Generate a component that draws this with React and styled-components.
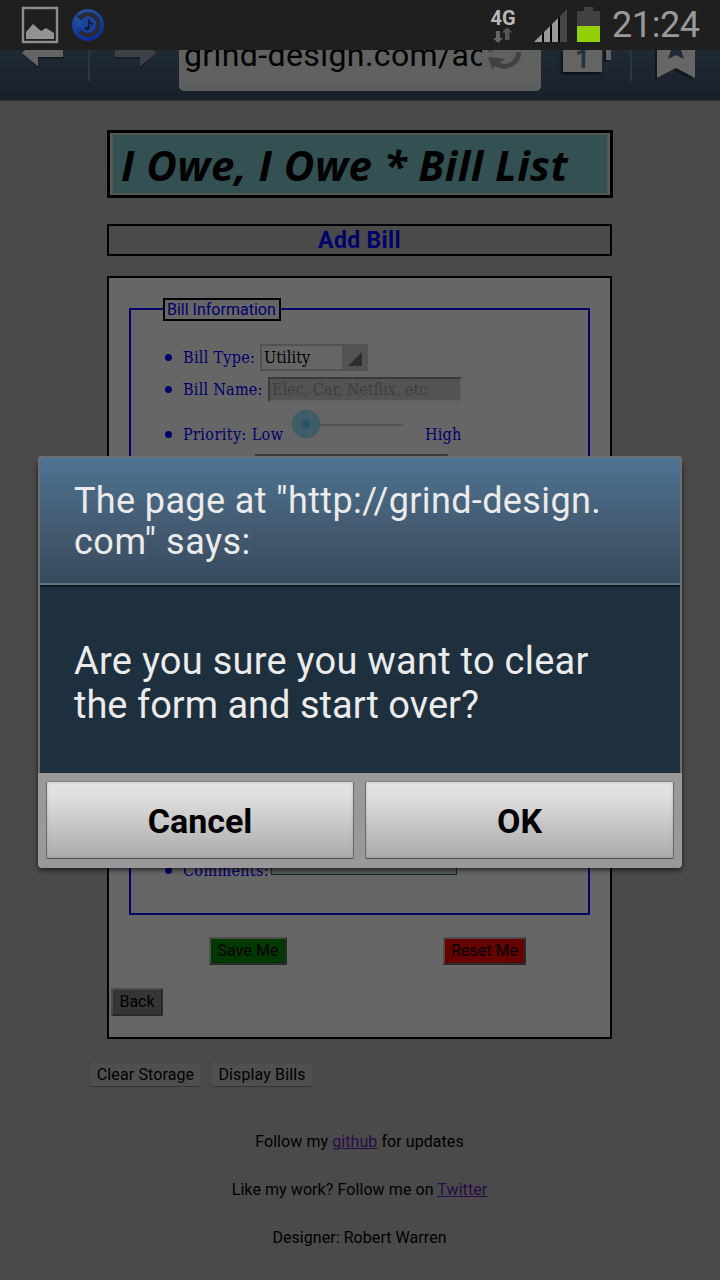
import React from 'react';
import styled, { createGlobalStyle } from 'styled-components';

const Global = createGlobalStyle`
  * { box-sizing: border-box; }
  body { margin: 0; background: #4a4a4a; }
  button, input, select { margin: 0; outline: none; }
`;

const sans = `Roboto, 'Liberation Sans', sans-serif`;
const serif = `'DejaVu Serif Condensed', 'DejaVu Serif', serif`;

const Screen = styled.div`
  position: relative;
  width: 720px;
  height: 1280px;
  overflow: hidden;
  background: #4a4a4a;
  font-family: ${sans};
  font-size: 16px;
  color: #000;
`;

const Txt = styled.span`
  white-space: pre;
  letter-spacing: ${(p) => p.$ls || 0}px;
`;

/* ---------- status bar ---------- */
const StatusBar = styled.header`
  display: flex;
  align-items: flex-start;
  height: 50px;
  background: #1f1f1f;
  svg { display: block; flex: none; }
`;
const Spacer = styled.div`flex: 1;`;
const Network = styled.div`
  width: 30px;
  margin-right: 16px;
  padding-top: 8px;
  text-align: center;
  font: 700 20px/20px ${sans};
  color: #b9b9b9;
  svg { margin: 0 auto; }
`;
const Clock = styled.time`
  width: 90px;
  margin: 4px 18px 0 11px;
  font: 400 36px/42px ${sans};
  color: #999;
`;

/* ---------- browser bar ---------- */
const BrowserBar = styled.nav`
  display: flex;
  height: 51px;
  overflow: hidden;
  background: linear-gradient(#202a34, #18212b 48px, #18212b);
  border-bottom: 1px solid #303438;
  svg { display: block; flex: none; }
`;
const Divider = styled.i`
  flex: none;
  width: 2px;
  height: 31px;
  background: #2c3640;
`;
const UrlBox = styled.div`
  display: flex;
  flex: none;
  width: 362px;
  height: 41px;
  margin-left: 22px;
  border-radius: 0 0 5px 5px;
  background: linear-gradient(#5f6060, #616161 24px, #5c5d5f);
`;
const Url = styled.div`
  width: 298px;
  height: 41px;
  margin: -14px 0 0 5px;
  overflow: hidden;
  font: 400 32px/38px ${sans};
`;

/* ---------- page ---------- */
const Page = styled.main`
  display: flex;
  flex-direction: column;
  align-items: center;
  padding-top: 29px;
`;
const Banner = styled.h1`
  width: 506px;
  height: 68px;
  margin: 0;
  padding: 1px 2px;
  border: 3px solid #000;
  background: #5d5b55;
`;
const BannerInner = styled.div`
  height: 60px;
  padding: 0 0 0 8px;
  border: 1px solid #55564b;
  background: #335152;
  font: italic 700 42px/59px 'Open Sans', 'Noto Sans', sans-serif;
`;
const Heading = styled.h2`
  width: 505px;
  height: 32px;
  margin: 26px 1px 0 0;
  border: 2px solid #000;
  text-align: center;
  color: #00006a;
  font: 700 23px/30px ${sans};
`;
const FormBox = styled.div`
  display: flex;
  flex-direction: column;
  width: 505px;
  height: 763px;
  margin: 20px 1px 0 0;
  padding: 20px 20px 0;
  border: 2px solid #000;
  background: #666;
`;
const Fieldset = styled.fieldset`
  width: 461px;
  height: 617px;
  margin: 0;
  padding: 0 0 0 32px;
  border: 2px solid #000069;
  color: #00006a;
`;
const Legend = styled.legend`
  height: 22px;
  padding: 0;
`;
const LegendBox = styled.div`
  width: 118px;
  height: 23px;
  padding-left: 2px;
  border: 2px solid #000;
  font: 400 16px/20px ${sans};
`;
const List = styled.ul`
  display: flex;
  flex-direction: column;
  height: 555px;
  margin: 0;
  padding: 24px 0 0;
  list-style: none;
  font: 400 16px/22px ${serif};
`;
const Row = styled.li`
  display: flex;
  flex: none;
  height: ${(p) => p.$h}px;
  margin-top: ${(p) => p.$top || 0};
  align-items: flex-start;
`;
const Bullet = styled.i`
  flex: none;
  width: 7px;
  height: 7px;
  margin: ${(p) => p.$y}px 11px 0 2px;
  border-radius: 50%;
  background: #00006a;
`;
const Label = styled.label`
  flex: none;
  width: ${(p) => p.$w}px;
  margin-top: ${(p) => p.$y}px;
  white-space: pre;
  letter-spacing: ${(p) => p.$ls || 0}px;
`;
const Select = styled.div`
  display: flex;
  width: 108px;
  height: 27px;
  border: 2px solid #525252;
  color: #000;
  line-height: 23px;
  span { flex: 1; padding-left: 2px; letter-spacing: 0.1px; }
  svg { display: block; background: #535353; }
`;
const Field = styled.div`
  width: 194px;
  height: 25px;
  padding-left: 2px;
  border: 2px solid;
  border-color: #3a3a3a #626262 #626262 #3a3a3a;
  background: #535353;
  color: #3f3f3f;
  line-height: 22px;
`;
const Comments = styled.div`
  width: 186px;
  height: 60px;
  border: 1px solid #10292d;
  background: #555b59;
`;
const Buttons = styled.div`
  display: flex;
  margin: 22px 0 0 80px;
  gap: 156px;
`;
const Bevel = styled.button`
  flex: none;
  width: ${(p) => p.$w}px;
  height: 28px;
  padding: 0;
  border: 2px solid;
  border-color: #4c4c4c #2a2a2a #2a2a2a #4c4c4c;
  background: ${(p) => p.$bg};
  color: #000;
  font: 400 16px/22px ${sans};
`;
const BackRow = styled.div`
  margin: 23px 0 0 -18px;
`;
const Tools = styled.div`
  display: flex;
  align-self: flex-start;
  gap: 12px;
  margin: 24px 0 0 91px;
`;
const Flat = styled.button`
  width: ${(p) => p.$w}px;
  height: 24px;
  padding: 0;
  border: 0;
  border-bottom: 1px solid #343434;
  border-radius: 2px;
  background: #4f4f4f;
  color: #000;
  font: 400 16px/22px ${sans};
`;
const Footer = styled.footer`
  margin: 43px 1px 0 0;
  text-align: center;
  p { height: 24px; margin: 0 0 24px; line-height: 24px; }
  a { color: #2a0b48; text-decoration: underline; }
`;

/* ---------- dialog ---------- */
const Dialog = styled.section`
  position: absolute;
  left: 38px;
  top: 456px;
  width: 644px;
  height: 412px;
  display: flex;
  flex-direction: column;
  border-radius: 4px;
  background: #9b989b;
  overflow: hidden;
`;
const Shadow = styled.div`
  position: absolute;
  left: 38px;
  top: 462px;
  width: 644px;
  height: 406px;
  border-radius: 4px;
  box-shadow: 0 2px 5px rgba(0, 0, 0, 0.65);
`;
const DialogTop = styled.div`
  height: 317px;
  border: 2px solid #6b6e70;
  border-bottom: 0;
  border-radius: 4px 4px 0 0;
  background: #1e2f3d;
  color: #ebebeb;
`;
const DialogTitle = styled.div`
  height: 127px;
  padding: 23px 0 0 34px;
  border-bottom: 2px solid #64757b;
  background: linear-gradient(#4d7391, #43596f 60%, #374b60);
  font: 400 36px/41px ${sans};
`;
const DialogBody = styled.div`
  height: 188px;
  padding: 52px 0 0 34px;
  border-top: 2px solid #0f1a22;
  font: 400 38px/44px ${sans};
`;
const Line = styled.div`
  white-space: pre;
  letter-spacing: ${(p) => p.$ls || 0}px;
`;
const DialogActions = styled.div`
  display: flex;
  gap: 11px;
  padding: 8px 8px 0;
`;
const Action = styled.button`
  flex: none;
  width: ${(p) => p.$w}px;
  height: 78px;
  padding: 2px 0 0;
  border: 1px solid;
  border-color: #858585 #6a6a6a #505050;
  border-radius: 2px;
  background: linear-gradient(#e2e2e2, #dedede 20%, #aaa);
  box-shadow: inset 0 0 3px rgba(0, 0, 0, 0.15);
  color: #000;
  font: 700 34px/40px ${sans};
`;

const StatusIcon = styled.svg`
  margin: ${(p) => p.$m};
`;
const PictureIcon = () => (
  <StatusIcon $m="6px 0 0 21px" width="38" height="38" viewBox="0 0 38 38">
    <rect x="2" y="2" width="34" height="34" fill="none" stroke="#8e8e8e" strokeWidth="2.400" />
    <path d="M5 33V26L12 18L20 25L25 22L33 27V33Z" fill="#929292" />
  </StatusIcon>
);
const MusicIcon = () => (
  <StatusIcon $m="8px 0 0 12px" width="34" height="34" viewBox="0 0 34 34">
    <defs>
      <linearGradient id="blue" x1="0" y1="0" x2="0.4" y2="1">
        <stop offset="0" stopColor="#26569f" />
        <stop offset="1" stopColor="#102c99" />
      </linearGradient>
    </defs>
    <circle cx="17" cy="17" r="16" fill="url(#blue)" />
    <path d="M9.500 9.500A10.500 10.500 0 1 1 9 23.500" fill="none" stroke="#292b30" strokeWidth="4" />
    <path d="M5 6V18H16L11.500 13.500L9 11Z" fill="#214d99" />
    <path d="M6 7L10 11L13 9" fill="none" stroke="#1c2536" strokeWidth="1.500" />
    <circle cx="17" cy="17" r="7.500" fill="#1c439c" />
    <path d="M17.800 11V20" stroke="#111c33" strokeWidth="1.500" />
    <path d="M18 11Q19 14 22 15L21 19Q21 16 18 15Z" fill="#111c33" />
    <ellipse cx="16" cy="20.500" rx="2.500" ry="1.800" fill="#111c33" />
  </StatusIcon>
);
const DataArrows = () => (
  <svg width="20" height="16" viewBox="0 0 20 16">
    <path d="M3 3H7V10H10L5 15L0 10H3Z" fill="#656565" />
    <path d="M14 -1L19.500 4.500H16.500V12H12V4.500H9Z" fill="#555" />
  </svg>
);
const SignalIcon = () => (
  <StatusIcon $m="9px 10px 0 0" width="33" height="33" viewBox="0 0 33 33">
    <path d="M0 33L33 0V33Z" fill="#464646" />
    <path d="M0 33L26 7V33Z" fill="#000" />
    <path d="M0 33L8 25V33ZM10 33V23L16 17V33ZM18 33V15L24 9V33Z" fill="#999" />
  </StatusIcon>
);
const BatteryIcon = () => (
  <StatusIcon $m="7px 1px 0 0" width="23" height="35" viewBox="0 0 23 35">
    <path d="M0 4H7V0H16V4H23V19H0Z" fill="#414141" />
    <rect y="19" width="23" height="16" fill="#93cf06" />
  </StatusIcon>
);
const BarIcon = styled.svg`
  margin-left: ${(p) => p.$ml}px;
`;
const BackArrow = () => (
  <BarIcon $ml={22} width="42" height="20" viewBox="0 0 42 20">
    <path d="M1 4.500L16.500 18.500V8.500H42V7H16V16Z" fill="#10161c" />
    <path d="M0 3L3 0H41V7H16V16.500Z" fill="#646464" />
  </BarIcon>
);
const ForwardArrow = () => (
  <BarIcon $ml={25} width="42" height="20" viewBox="0 0 42 20">
    <path d="M0 7H25V16.500L41 3L25 18.500V8.500H0Z" fill="#161d24" />
    <path d="M0 0H38L41 3L25 16.500V7H0Z" fill="#3b4147" />
  </BarIcon>
);
const ReloadIcon = () => (
  <BarIcon $ml={6} width="36" height="22" viewBox="0 0 36 22">
    <path d="M30.500 2A14 14 0 0 1 9 14" fill="none" stroke="#414141" strokeWidth="5" />
    <path d="M0 7L17 9L4 19Z" fill="#414141" />
    <path d="M0 1H5" stroke="#4a4a4a" strokeWidth="2" />
  </BarIcon>
);
const TabsBox = styled.div`
  width: 39px;
  height: 22px;
  margin-left: 22px;
  background: #646464;
  box-shadow: -2px 2px 2px #0c1116;
  color: #27323c;
  text-align: center;
  font: 700 25px/19px ${sans};
`;
const TabEdge = styled.i`
  width: 5px;
  height: 10px;
  margin: 0 19px 0 4px;
  background: #646464;
  box-shadow: -2px 1px 1px #0c1116;
`;
const BookmarkIcon = () => (
  <BarIcon $ml={22} width="42" height="32" viewBox="0 0 42 32">
    <path d="M1 0H38V30L19 20L1 30Z" fill="#10161c" />
    <path d="M3 0H41V28L22 18L3 28Z" fill="#666" />
    <path d="M17 0H27L30 9L22 5L14 9Z" fill="#1e2a36" />
  </BarIcon>
);
const SliderArt = styled.svg`
  display: block;
  flex: none;
  margin-right: 21px;
`;
const Slider = () => (
  <SliderArt width="113" height="30" viewBox="0 0 113 30">
    <path d="M14 16H112" stroke="#555" strokeWidth="2" />
    <circle cx="15" cy="15" r="14.300" fill="#3f5d69" />
    <circle cx="15" cy="15" r="4.500" fill="#255567" />
  </SliderArt>
);
const BarGap = styled.div`
  flex: none;
  width: 24px;
`;

export default function App() {
  return (
    <Screen>
      <Global />
      <StatusBar>
        <PictureIcon />
        <MusicIcon />
        <Spacer />
        <Network>4G<DataArrows /></Network>
        <SignalIcon />
        <BatteryIcon />
        <Clock><Txt $ls={-0.4}>21:24</Txt></Clock>
      </StatusBar>
      <BrowserBar>
        <BackArrow />
        <BarGap />
        <Divider />
        <ForwardArrow />
        <UrlBox>
          <Url><Txt $ls={0.4}>grind-design.com/ac</Txt></Url>
          <ReloadIcon />
        </UrlBox>
        <TabsBox>1</TabsBox>
        <TabEdge />
        <Divider />
        <BookmarkIcon />
      </BrowserBar>

      <Page>
        <Banner><BannerInner><Txt $ls={0.45}>I Owe, I Owe * Bill List</Txt></BannerInner></Banner>
        <Heading><Txt $ls={0.35}>Add Bill</Txt></Heading>
        <FormBox>
          <Fieldset>
            <Legend><LegendBox><Txt>Bill Information</Txt></LegendBox></Legend>
            <List>
              <Row $h={33}>
                <Bullet $y={10} />
                <Label $w={77} $y={3} $ls={0.3}>Bill Type:</Label>
                <Select>
                  <span>Utility</span>
                  <svg width="24" height="23" viewBox="0 0 24 23"><path d="M6 20L20 6V20Z" fill="#2d2d2d" /></svg>
                </Select>
              </Row>
              <Row $h={32}>
                <Bullet $y={9} />
                <Label $w={85} $y={2} $ls={0.25}>Bill Name:</Label>
                <Field><Txt>Elec, Car, Netflix, etc</Txt></Field>
              </Row>
              <Row $h={45}>
                <Bullet $y={22} />
                <Label $w={108} $y={15} $ls={0.4}>Priority: Low</Label>
                <Slider />
                <Label $w={40} $y={15} $ls={0.2}>High</Label>
              </Row>
              <Row $h={32}>
                <Bullet $y={10} />
                <Label $w={72} $y={2}>Due Date:</Label>
                <Field />
              </Row>
              <Row $h={60} $top="auto">
                <Bullet $y={52} />
                <Label $w={88} $y={45} $ls={0.35}>Comments:</Label>
                <Comments />
              </Row>
            </List>
          </Fieldset>
          <Buttons>
            <Bevel $w={78} $bg="#003800"><Txt $ls={0.1}>Save Me</Txt></Bevel>
            <Bevel $w={83} $bg="#670000"><Txt>Reset Me</Txt></Bevel>
          </Buttons>
          <BackRow><Bevel $w={52} $bg="#353535"><Txt>Back</Txt></Bevel></BackRow>
        </FormBox>
        <Tools>
          <Flat $w={109}><Txt $ls={0.12}>Clear Storage</Txt></Flat>
          <Flat $w={100}><Txt $ls={0.12}>Display Bills</Txt></Flat>
        </Tools>
        <Footer>
          <p><Txt $ls={0.07}>Follow my <a>github</a> for updates</Txt></p>
          <p><Txt $ls={0.08}>Like my work? Follow me on <a>Twitter</a></Txt></p>
          <p><Txt $ls={0.06}>Designer: Robert Warren</Txt></p>
        </Footer>
      </Page>

      <Shadow />
      <Dialog>
        <DialogTop>
          <DialogTitle>
            <Line $ls={0.37}>The page at "http://grind-design.</Line>
            <Line $ls={0.5}>com" says:</Line>
          </DialogTitle>
          <DialogBody>
            <Line $ls={0.25}>Are you sure you want to clear</Line>
            <Line>the form and start over?</Line>
          </DialogBody>
        </DialogTop>
        <DialogActions>
          <Action $w={308}><Txt>Cancel</Txt></Action>
          <Action $w={309}><Txt>OK</Txt></Action>
        </DialogActions>
      </Dialog>
    </Screen>
  );
}
